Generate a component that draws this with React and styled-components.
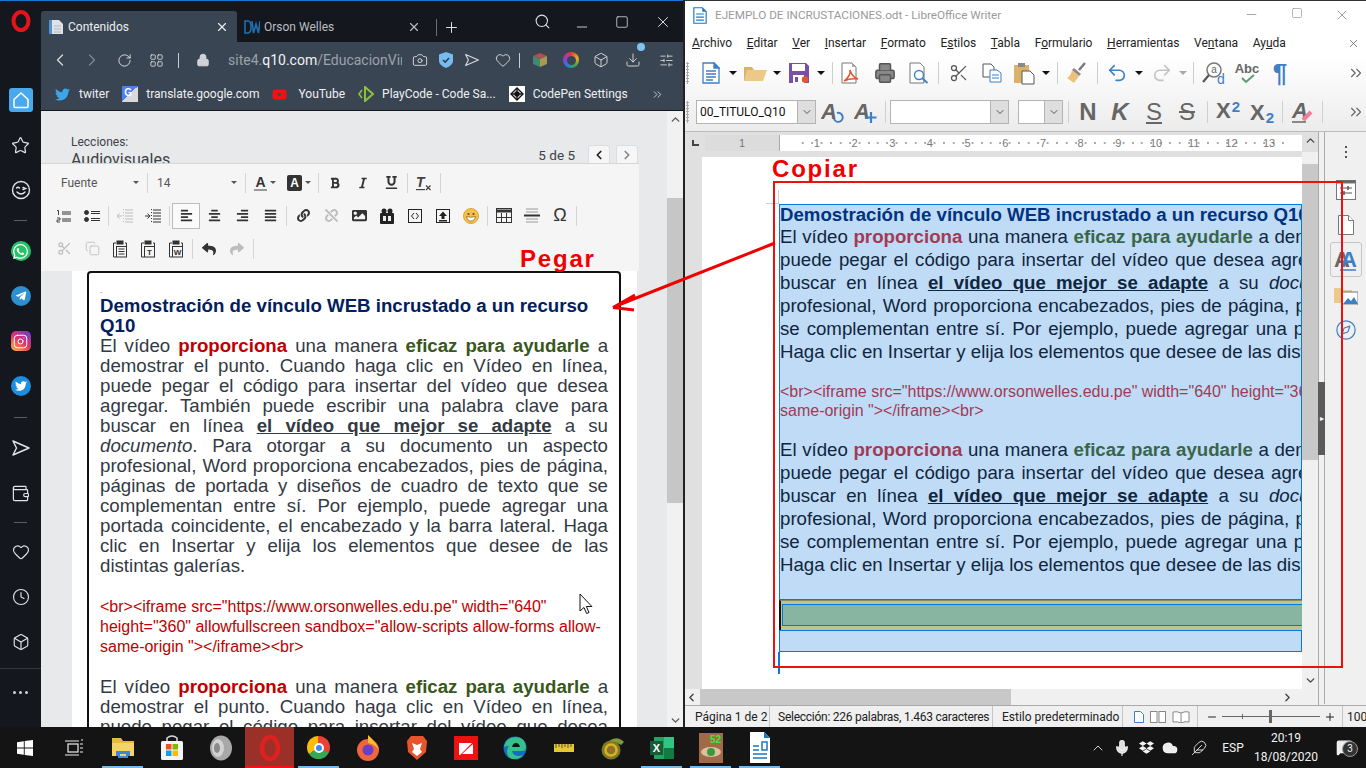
import React from 'react';
import styled, { createGlobalStyle } from 'styled-components';
import {
	ChevronLeft, ChevronRight, RotateCw, LayoutGrid, Lock, Camera, Heart, Box, Download,
	SlidersHorizontal, Search, Minus, Square, X, Plus, Star, Wallet, Clock, Scissors, Copy,
	Undo2, Redo2, Printer, ChevronsRight, ChevronUp, ChevronDown, Instagram, Compass, Mic, Feather,
	Cloud, MessageSquare,
} from 'lucide-react';
import {
	FaWhatsapp, FaTelegramPlane, FaTwitter, FaAlignLeft, FaAlignCenter, FaAlignRight, FaAlignJustify,
	FaLink, FaUnlink, FaImage, FaReply, FaShare, FaDropbox, FaYoutube, FaBold, FaItalic, FaUnderline,
} from 'react-icons/fa';

const GlobalStyle = createGlobalStyle`
	html, body { margin: 0; padding: 0; background: #141414; overflow: hidden; }
	* { box-sizing: border-box; }
`;

const SANS = `"Liberation Sans", Arial, sans-serif`;
const UI = `Roboto, "Noto Sans", sans-serif`;

const Page = styled.div`
	position: relative;
	width: 1366px;
	height: 768px;
	overflow: hidden;
	display: flex;
	flex-direction: column;
	font-family: ${UI};
`;

const Desktop = styled.div`
	display: flex;
	height: 727px;
	background: #222;
`;

/* ---------- Opera ---------- */

const Opera = styled.div`
	display: flex;
	width: 683px;
	border-top: 1px solid #1a78d6;
`;

const Sidebar = styled.nav`
	width: 41px;
	flex: none;
	background: #14181e;
	color: #e2e4e6;
	display: flex;
	flex-direction: column;
	align-items: center;
`;

const LogoBox = styled.div`
	height: 76.5px;
	padding-top: 9px;
	flex: none;
`;

const SideItem = styled.div`
	height: 45px;
	width: 100%;
	flex: none;
	display: flex;
	align-items: center;
	justify-content: center;
`;

const SideDivider = styled.div`
	height: ${p => p.$h}px;
	width: 13px;
	flex: none;
	display: flex;
	align-items: center;
	&::after {
		content: '';
		width: 100%;
		height: 1px;
		background: #5b5f64;
	}
`;

const SideRule = styled.div`
	width: 100%;
	height: 1px;
	margin-top: 3px;
	background: #34383e;
`;

const HomeBadge = styled.div`
	width: 24px;
	height: 24px;
	border-radius: 3px;
	background: #4aa9ec;
	display: flex;
	align-items: center;
	justify-content: center;
	color: #fff;
`;

const RoundBadge = styled.div`
	width: 20px;
	height: 20px;
	border-radius: 50%;
	background: ${p => p.$bg};
	display: flex;
	align-items: center;
	justify-content: center;
	color: #fff;
`;

const InstaBadge = styled.div`
	width: 20px;
	height: 20px;
	border-radius: 5px;
	background: linear-gradient(35deg, #f9b33c 5%, #e1306c 50%, #6a3fc8 95%);
	display: flex;
	align-items: center;
	justify-content: center;
	color: #fff;
`;

const Dots = styled.div`
	display: flex;
	gap: 3px;
	margin-top: 2px;
	& > i {
		width: 3px;
		height: 3px;
		border-radius: 50%;
		background: #cfd1d3;
	}
`;

const BrowserMain = styled.div`
	flex: 1;
	min-width: 0;
	display: flex;
	flex-direction: column;
`;

const TabBar = styled.div`
	height: 41px;
	flex: none;
	background: #14181e;
	display: flex;
	align-items: flex-end;
	color: #d8dadc;
	font-size: 12px;
`;

const Tab = styled.div`
	width: ${p => p.$w}px;
	height: 31px;
	flex: none;
	display: flex;
	align-items: center;
	padding: 0 8px 0 7px;
	gap: 4px;
	border-radius: 3px 3px 0 0;
	background: ${p => (p.$active ? '#3a4553' : 'transparent')};
	color: ${p => (p.$active ? '#eceef0' : '#b9bdc2')};
`;

const TabLabel = styled.span`
	flex: 1;
	white-space: nowrap;
`;

const TabSep = styled.div`
	width: 1px;
	height: 17px;
	background: #6a6e73;
	margin: 0 6px 6px 7px;
`;

const TabPlus = styled.div`
	display: flex;
	margin-bottom: 6px;
	color: #e0e2e4;
`;

const WindowIcons = styled.div`
	display: flex;
	align-items: center;
	height: 41px;
	color: #e0e2e4;
	position: relative;
	margin-left: auto;
`;

const Wbtn = styled.div`
	width: ${p => p.$w}px;
	display: flex;
	justify-content: center;
	padding-top: ${p => p.$top || 0}px;
`;

const AddressBar = styled.div`
	height: 36px;
	flex: none;
	background: #3a4553;
	display: flex;
	align-items: center;
	padding-left: 3px;
	color: #d7dadd;
`;

const Aslot = styled.div`
	width: ${p => p.$w}px;
	flex: none;
	display: flex;
	align-items: center;
	justify-content: center;
	position: relative;
	color: ${p => p.$c || 'inherit'};
`;

const ThinSep = styled.div`
	width: 1px;
	height: 15px;
	background: #c9ccd0;
	flex: none;
`;

const Url = styled.div`
	width: 174px;
	flex: none;
	overflow: hidden;
	white-space: nowrap;
	font-size: 14px;
	color: #9aa2ab;
	margin-left: 6px;
	& b { font-weight: 400; color: #f0f2f4; }
`;

const DownloadDot = styled.i`
	position: absolute;
	top: -9px;
	right: 3px;
	width: 8px;
	height: 8px;
	border-radius: 50%;
	background: #7cc4f2;
`;

const Bookmarks = styled.div`
	height: 33px;
	flex: none;
	background: #3a4553;
	border-bottom: 1px solid #14181e;
	display: flex;
	align-items: center;
	padding-left: 14px;
	font-size: 12px;
	color: #eef0f2;
	white-space: nowrap;
`;

const Bookmark = styled.div`
	display: flex;
	align-items: center;
	gap: ${p => p.$gap || 8}px;
	margin-right: ${p => p.$mr || 13}px;
`;

const GoogleIcon = styled.div`
	width: 16px;
	height: 16px;
	background: linear-gradient(135deg, #4d7ff0 50%, #d9d9dc 50%);
	color: #fff;
	font: bold 10px ${SANS};
	padding: 1px 0 0 2px;
`;

const CodePenIcon = styled.div`
	width: 16px;
	height: 16px;
	background: #fff;
	color: #111;
	display: flex;
	align-items: center;
	justify-content: center;
`;

const ContentRow = styled.div`
	flex: 1;
	min-height: 0;
	display: flex;
`;

const Content = styled.main`
	width: 626px;
	flex: none;
	background: #e8e9eb;
	display: flex;
	flex-direction: column;
	overflow: hidden;
`;

const LessonHeader = styled.header`
	height: 52px;
	flex: none;
	overflow: hidden;
	padding: 24px 0 0 30px;
	display: flex;
	justify-content: space-between;
	color: #3c4248;
`;

const LessonTitle = styled.div`
	font-size: 12px;
	line-height: 14px;
	& > div { font-size: 16px; line-height: 20px; margin-top: 1px; }
`;

const Pager = styled.div`
	display: flex;
	align-items: center;
	height: 18px;
	margin: 11px 30px 0 0;
	font-size: 13.5px;
`;

const PagerBtn = styled.div`
	width: 20px;
	height: 18px;
	background: #f6f6f7;
	box-shadow: 0 0 0 1px #dcdde0;
	border-radius: 2px;
	display: flex;
	align-items: center;
	justify-content: center;
	margin-left: ${p => p.$ml}px;
	color: ${p => (p.$off ? '#8a8a8a' : '#222')};
`;

const EditorBar = styled.div`
	width: 598px;
	height: 108px;
	flex: none;
	background: #f5f5f5;
	border-top: 1px solid #d6d6d6;
	padding: 2px 0 0 9px;
`;

const EdRow = styled.div`
	height: 33px;
	display: flex;
	align-items: center;
`;

const EdSlot = styled.div`
	width: ${p => p.$w || 28}px;
	height: 26px;
	flex: none;
	display: flex;
	align-items: center;
	justify-content: center;
	color: ${p => (p.$off ? '#bdbdbd' : '#333')};
	border: 1px solid ${p => (p.$on ? '#bcbcbc' : 'transparent')};
	background: ${p => (p.$on ? '#fafafa' : 'transparent')};
	gap: 3px;
`;

const EdSep = styled.div`
	width: 1px;
	height: 20px;
	margin: 0 2px;
	background: #d4d4d4;
	flex: none;
`;

const EdCombo = styled.div`
	width: ${p => p.$w}px;
	height: 26px;
	flex: none;
	display: flex;
	align-items: center;
	justify-content: space-between;
	padding: 0 6px 0 ${p => p.$pl}px;
	font-size: 12px;
	color: #555;
`;

const Caret = styled.i`
	width: 0;
	height: 0;
	flex: none;
	border-left: ${p => p.$s || 3}px solid transparent;
	border-right: ${p => p.$s || 3}px solid transparent;
	border-top: ${p => p.$s || 3}px solid ${p => p.$c || '#555'};
`;

const ColorA = styled.span`
	font: bold 14px ${SANS};
	color: #333;
	border-bottom: 2px solid #999;
	line-height: 14px;
	padding: 0 1px;
`;

const BoxA = styled.span`
	font: bold 12px ${SANS};
	color: #fff;
	background: #333;
	border-radius: 2px;
	padding: 1px 3px;
`;

const Omega = styled.span`
	font: 18px ${SANS};
	color: #333;
`;

const EditArea = styled.div`
	flex: 1;
	min-height: 0;
	width: 565px;
	margin-left: 31px;
	padding: 0 16px 0 15px;
	background: #fff;
	overflow: hidden;
`;

const Doc = styled.div`
	--ink: ${p => p.$ink};
	--hot: ${p => p.$hot};
	--leaf: ${p => p.$leaf};
	--head: ${p => p.$headc};
	font-family: ${SANS};
	color: var(--ink);
`;

const DocBox = styled(Doc)`
	height: 700px;
	border: 2px solid #111;
	border-radius: 4px;
	padding: 8px 11px;
	font-size: 18.67px;
	line-height: 20px;
`;

const Speck = styled.div`
	height: 15px;
	font-size: 8px;
`;

const Heading = styled.div`
	font-weight: 700;
	color: var(--head);
`;

const Para = styled.p`
	margin: 0;
	text-align: justify;
`;

const Hot = styled.b`color: var(--hot);`;
const Leaf = styled.b`color: var(--leaf);`;
const Under = styled.b`text-decoration: underline;`;

const Code = styled.p`
	color: var(--hot);
	font-size: 16px;
	margin: 0;
`;

const LeftCode = styled(Code)`
	margin: 21px 0 20px;
	line-height: 20px;
`;

const ScrollTrack = styled.div`
	width: 16px;
	flex: none;
	background: #f1f1f1;
	display: flex;
	flex-direction: column;
	align-items: center;
	color: #555;
	padding-top: 2px;
`;

const ScrollThumb = styled.div`
	width: 16px;
	height: 305px;
	margin-top: 72px;
	background: #c6c6c6;
	margin-bottom: auto;
`;

/* ---------- Writer ---------- */

const Writer = styled.div`
	width: 681px;
	margin-left: 2px;
	display: flex;
	flex-direction: column;
	background: #fff;
	border-top: 1px solid #333;
	font-family: ${UI};
`;

const TitleBar = styled.div`
	height: 28px;
	flex: none;
	display: flex;
	align-items: center;
	padding-left: 8px;
	font-size: 11.7px;
	color: #9a9a9a;
	gap: 8px;
`;

const TitleButtons = styled.div`
	margin-left: auto;
	display: flex;
	color: #888;
	padding-right: 2px;
`;

const TitleBtn = styled.div`
	width: 45px;
	display: flex;
	justify-content: center;
`;

const MenuBar = styled.div`
	height: 28px;
	flex: none;
	display: flex;
	align-items: center;
	gap: 14.6px;
	padding-left: 7px;
	font-size: 12px;
	color: #222;
	& u { text-underline-offset: 1px; }
`;

const MenuClose = styled.div`
	margin-left: auto;
	padding-right: 6px;
	color: #555;
	display: flex;
`;

const ToolStack = styled.div`
	flex: none;
	background: linear-gradient(#fff, #ececec);
	border-bottom: 1px solid #bcbcbc;
`;

const ToolRow = styled.div`
	height: ${p => p.$h}px;
	display: flex;
	align-items: center;
	padding-bottom: ${p => p.$pb || 0}px;
`;

const Grip = styled.div`
	width: 11px;
	height: 22px;
	flex: none;
	background: radial-gradient(circle, #a8a8a8 1px, transparent 1.2px) 1px 0 / 3px 3px repeat-y;
`;

const Tslot = styled.div`
	width: ${p => p.$w}px;
	flex: none;
	display: flex;
	align-items: center;
	justify-content: center;
	position: relative;
	color: ${p => p.$c || '#555'};
`;

const Tsep = styled.div`
	width: ${p => p.$w}px;
	height: 22px;
	flex: none;
	display: flex;
	justify-content: center;
	&::after {
		content: '';
		width: 1px;
		background: #cfcfcf;
	}
`;

const Overflow = styled.div`
	margin-left: auto;
	padding-right: 1px;
	color: #666;
	display: flex;
`;

const Combo = styled.div`
	width: ${p => p.$w}px;
	height: 24px;
	flex: none;
	margin-left: ${p => p.$ml || 0}px;
	background: #fff;
	border: 1px solid #b4b4b4;
	display: flex;
	align-items: center;
	font-size: 12px;
	color: #111;
	padding-left: 3px;
	white-space: nowrap;
`;

const ComboArrow = styled.div`
	margin-left: auto;
	width: 18px;
	height: 22px;
	background: #dedede;
	border-left: 1px solid #b4b4b4;
	display: flex;
	align-items: center;
	justify-content: center;
	color: #555;
`;

const BigGlyph = styled.span`
	font: ${p => p.$font || 'bold'} 24px ${SANS};
	color: #666;
	line-height: 24px;
	text-decoration: ${p => p.$deco || 'none'};
`;

const Script = styled.span`
	font: bold 22px ${SANS};
	color: #666;
	display: flex;
	align-items: ${p => (p.$up ? 'flex-start' : 'flex-end')};
	height: 26px;
	line-height: 24px;
	& > i {
		font: bold 15px ${SANS};
		color: #3f7fc4;
		line-height: ${p => (p.$up ? '15px' : '14px')};
		margin-left: 1px;
	}
`;

const Pilcrow = styled.span`
	font: bold 26px ${SANS};
	color: #3f7fc4;
`;

const WriterBody = styled.div`
	flex: 1;
	min-height: 0;
	display: flex;
	position: relative;
`;

const DocColumn = styled.div`
	width: 633px;
	flex: none;
	display: flex;
	flex-direction: column;
`;

const RulerRow = styled.div`
	height: 20px;
	flex: none;
	display: flex;
	background: #e0e0e0;
	padding-top: 3px;
	color: #444;
`;

const TabStop = styled.div`
	width: 20px;
	flex: none;
	padding: 5px 0 0 7px;
	& > i {
		display: block;
		width: 7px;
		height: 6px;
		border-left: 2px solid #444;
		border-bottom: 2px solid #444;
	}
`;

const Ruler = styled.div`
	width: 597px;
	flex: none;
	height: 16px;
	background: #fff;
	display: flex;
	font: 11px ${SANS};
	color: #777;
	overflow: hidden;
`;

const RulerMargin = styled.div`
	position: relative;
	z-index: 1;
	width: 75px;
	flex: none;
	background: #dcdcdc;
	border-right: 1px solid #aaa;
	text-align: center;
	line-height: 16px;
`;

const RulerNum = styled.span`
	width: 37.7px;
	flex: none;
	text-align: center;
	line-height: 16px;
	transform: translateX(18px);
	background: radial-gradient(circle, #aaa 0.7px, transparent 1px) 0 0 / 9.425px 16px repeat-x;
`;

const UpBox = styled.div`
	width: 16px;
	flex: none;
	display: flex;
	justify-content: center;
	margin-top: -1px;
	color: #444;
`;

const DocRow = styled.div`
	flex: 1;
	min-height: 0;
	display: flex;
	background: #e0e0e0;
`;

const Sheet = styled.div`
	position: relative;
	width: 600px;
	margin: 5px 0 0 17px;
	flex: none;
	background: #fff;
	padding: 47px 0 0 77px;
	overflow: hidden;
`;

const CropMark = styled.div`
	position: absolute;
	left: 64px;
	top: 33px;
	width: 13px;
	height: 14px;
	border-right: 1px solid #cfcfcf;
	border-bottom: 1px solid #cfcfcf;
`;

const Selection = styled(Doc)`
	position: relative;
	width: 523px;
	background: #c0dbf5;
	border: 1px solid #0a76e0;
	overflow: hidden;
	font-size: 18.67px;
`;

const SelectedHead = styled(Heading)`
	line-height: 19.5px;
	white-space: nowrap;
`;

const Wide = styled.div`
	width: 965px;
	line-height: 23px;
`;

const SelectedCode = styled(Code)`
	width: 965px;
	line-height: 19px;
	margin: 19px 0 18px;
`;

const TrailingRoom = styled.div`
	height: 23px;
`;

const TableBand = styled.div`
	width: 523px;
	height: 30px;
	background: #b9c78e;
	border-top: 1px solid #8a8a60;
	border-left: 2px solid #111;
	padding: 3px 0 0 1px;
	overflow: hidden;
`;

const TableCell = styled.div`
	width: 540px;
	height: 22px;
	background: #87b5a2;
	border: 1px solid #0a76e0;
`;

const EmptyPara = styled.div`
	width: 523px;
	height: 22px;
	background: #c0dbf5;
	border: 1px solid #0a76e0;
`;

const CursorLine = styled.div`
	width: 2px;
	height: 22px;
	margin-left: -1px;
	background: #0a76e0;
`;

const VScroll = styled.div`
	width: 16px;
	flex: none;
	background: #f0f0f0;
	display: flex;
	flex-direction: column;
	align-items: center;
	color: #444;
	padding: 8px 0 2px;
`;

const VThumb = styled.div`
	width: 16px;
	height: 296px;
	margin-top: 4px;
	margin-bottom: auto;
	background: #c8c8c8;
`;

const HScroll = styled.div`
	height: 16px;
	flex: none;
	background: #f0f0f0;
	display: flex;
	align-items: center;
	color: #444;
`;

const HThumb = styled.div`
	width: 311px;
	height: 16px;
	background: #c8c8c8;
	margin-left: 1px;
`;

const HArrow = styled.div`
	width: ${p => p.$w}px;
	display: flex;
	justify-content: ${p => (p.$end ? 'flex-end' : 'flex-start')};
`;

const Deck = styled.aside`
	flex: 1;
	background: #f0f0f0;
	border-left: 1px solid #aaa;
	display: flex;
	flex-direction: column;
	align-items: center;
	padding-left: 6px;
	position: relative;
	&::before {
		content: '';
		position: absolute;
		left: 5px;
		top: 0;
		bottom: 1px;
		width: 1px;
		background: #aaa;
	}
`;

const DeckDots = styled.div`
	height: 40px;
	flex: none;
	display: flex;
	flex-direction: column;
	justify-content: center;
	gap: 3px;
	& > i {
		width: 2px;
		height: 2px;
		background: #555;
	}
`;

const DeckItem = styled.div`
	width: 32px;
	height: 35px;
	flex: none;
	display: flex;
	align-items: center;
	justify-content: center;
	border: ${p => (p.$on ? '1px solid #c6c6c6' : 'none')};
	border-radius: 3px;
`;

const Collapse = styled.div`
	position: absolute;
	left: 633px;
	top: 250px;
	width: 7px;
	height: 73px;
	background: #5a5a5a;
	color: #fff;
	display: flex;
	align-items: center;
	justify-content: center;
	font-size: 8px;
`;

const StatusBar = styled.footer`
	height: 22px;
	flex: none;
	background: #f0f0f0;
	border-top: 1px solid #aaa;
	display: flex;
	align-items: center;
	font-size: 12px;
	color: #222;
	white-space: nowrap;
	overflow: hidden;
`;

const StatusCell = styled.div`
	width: ${p => p.$w}px;
	flex: none;
	height: 22px;
	display: flex;
	align-items: center;
	gap: ${p => p.$gap || 0}px;
	padding-left: ${p => p.$pl || 0}px;
	letter-spacing: ${p => (p.$tight ? '-0.25px' : 'normal')};
	border-right: ${p => (p.$last ? 'none' : '1px solid #c4c4c4')};
`;

const ZoomLine = styled.div`
	position: relative;
	width: 98px;
	height: 1px;
	background: #666;
	margin: 0 4px;
	flex: none;
	&::before {
		content: '';
		position: absolute;
		left: 20px;
		top: -2px;
		width: 1px;
		height: 5px;
		background: #666;
	}
	&::after {
		content: '';
		position: absolute;
		left: 47px;
		top: -6px;
		width: 3px;
		height: 13px;
		background: #666;
	}
`;

/* ---------- Taskbar ---------- */

const Taskbar = styled.footer`
	height: 41px;
	flex: none;
	background: #141414;
	display: flex;
	align-items: stretch;
	color: #f2f2f2;
`;

const TaskItem = styled.div`
	width: 49px;
	flex: none;
	display: flex;
	align-items: center;
	justify-content: center;
	position: relative;
	background: ${p => (p.$active ? '#9a3028' : 'transparent')};
	&::after {
		content: '';
		display: ${p => (p.$open || p.$active ? 'block' : 'none')};
		position: absolute;
		left: ${p => (p.$active ? 0 : 4)}px;
		right: ${p => (p.$active ? 0 : 4)}px;
		bottom: 0;
		height: 2px;
		background: ${p => (p.$active ? '#f01414' : '#76b9ed')};
	}
`;

const Tray = styled.div`
	margin-left: auto;
	display: flex;
	align-items: center;
	font-size: 12px;
`;

const TrayIcon = styled.div`
	width: ${p => p.$w}px;
	flex: none;
	display: flex;
	justify-content: center;
`;

const TrayClock = styled.div`
	width: 72px;
	text-align: center;
	font-size: 12px;
	line-height: 19px;
`;

const Notify = styled.div`
	position: relative;
	width: 44px;
	height: 100%;
	display: flex;
	align-items: center;
	justify-content: center;
`;

const NotifyCount = styled.span`
	position: absolute;
	left: 20px;
	top: 14px;
	width: 16px;
	height: 16px;
	border-radius: 50%;
	background: #333;
	border: 1px solid #999;
	font-size: 10px;
	line-height: 14px;
	text-align: center;
`;

const ConicIcon = styled.div`
	width: ${p => p.$size || 23}px;
	height: ${p => p.$size || 23}px;
	border-radius: 50%;
	background: ${p => p.$bg};
	display: flex;
	align-items: center;
	justify-content: center;
	& > i {
		width: ${p => p.$core}px;
		height: ${p => p.$core}px;
		border-radius: 50%;
		background: ${p => p.$corebg};
		border: ${p => p.$ring || 'none'};
	}
`;

/* ---------- Annotations ---------- */

const RedFrame = styled.div`
	position: absolute;
	left: 773px;
	top: 181px;
	width: 570px;
	height: 487px;
	border: 2px solid #f00f0f;
	pointer-events: none;
`;

const Callout = styled.div`
	position: absolute;
	left: ${p => p.$x}px;
	top: ${p => p.$y}px;
	font: bold 24px/28px ${SANS};
	letter-spacing: 1.8px;
	color: #f00000;
	pointer-events: none;
`;

const ArrowLayer = styled.svg`
	position: absolute;
	left: 0;
	top: 0;
	pointer-events: none;
`;

/* ---------- Drawn icons ---------- */

const OperaLogo = () => (
	<svg width="20" height="22" viewBox="0 0 20 22">
		<ellipse cx="10" cy="11" rx="7.500" ry="9" fill="none" stroke="#e3141b" strokeWidth="4" />
	</svg>
);

const HouseIcon = () => (
	<svg width="18" height="18" viewBox="0 0 18 18" fill="none" stroke="currentColor" strokeWidth="1.500" strokeLinejoin="round">
		<path d="M2 8.500L9 2l7 6.500V15.500q0 1-1 1H3q-1 0-1-1z" />
	</svg>
);

const WinkIcon = () => (
	<svg width="20" height="20" viewBox="0 0 20 20" fill="none" stroke="currentColor" strokeWidth="1.400" strokeLinecap="round">
		<circle cx="10" cy="10" r="8.500" />
		<path d="M5.500 8q1.500-1.500 3 0M12 7.500l2.500 1-2.500 1M6 12q4 4 8 0" />
	</svg>
);

const PlaneIcon = ({ size = 20 }) => (
	<svg width={size} height={size} viewBox="0 0 20 20" fill="none" stroke="currentColor" strokeWidth="1.400" strokeLinejoin="round">
		<path d="M2 3l16 7-16 7 3.500-7z" />
	</svg>
);

const DocTabIcon = () => (
	<svg width="16" height="16" viewBox="0 0 16 16">
		<path d="M1 1h10l4 4v10H1z" fill="#dfe3e8" />
		<path d="M1 1h3v14H1z" fill="#4f93d2" />
		<path d="M6 7h7M6 10h7M6 13h7" stroke="#b4b8bd" />
	</svg>
);

const DwIcon = () => (
	<svg width="16" height="14" viewBox="0 0 16 14">
		<path d="M1 1h3q3 0 3 6t-3 6H1z M8 1l1.500 12L12 4l2.500 9L16 1" fill="none" stroke="#1f6fb2" strokeWidth="1.600" />
	</svg>
);

const ShieldIcon = () => (
	<svg width="14" height="16" viewBox="0 0 14 16">
		<path d="M7 0l7 2.500V9q0 4-7 7-7-3-7-7V2.500z" fill="#74bdf0" />
		<path d="M4 8l2.200 2.200L10 6" fill="none" stroke="#2d3a48" strokeWidth="1.600" />
	</svg>
);

const CubeColor = () => (
	<svg width="16" height="16" viewBox="0 0 16 16">
		<path d="M8 1l7 3-7 3-7-3z" fill="#b05050" />
		<path d="M1 4l7 3v8l-7-3z" fill="#3f8a70" />
		<path d="M15 4l-7 3v8l7-3z" fill="#a89a50" />
	</svg>
);

const PlayCodeIcon = () => (
	<svg width="16" height="16" viewBox="0 0 16 16">
		<path d="M4 4L1 8l3 4" fill="none" stroke="#8fbf3f" strokeWidth="1.600" />
		<path d="M7 1l8 7-8 7z" fill="none" stroke="#8fbf3f" strokeWidth="2" />
	</svg>
);

const CodePenGlyph = () => (
	<svg width="14" height="14" viewBox="0 0 14 14" fill="none" stroke="#111" strokeWidth="1.400">
		<path d="M7 1l6 6-6 6-6-6z" />
		<path d="M1 7h12M7 1v12" />
		<circle cx="7" cy="7" r="2" fill="#111" />
	</svg>
);

const LeftCursor = () => (
	<ArrowLayer width="1366" height="768" viewBox="0 0 1366 768">
		<path d="M580 594v17l4-3.500 2.600 6 2.400-1-2.600-6h5.500z" fill="#fff" stroke="#111" strokeWidth="1" />
	</ArrowLayer>
);

const NumberList = () => (
	<svg width="16" height="14" viewBox="0 0 16 14" fill="none" stroke="#333">
		<path d="M6 3h9M6 5h9M6 10h9M6 12h9" />
		<path d="M1 1.500h1.500V6M1 9h3v2H1v2h3" strokeWidth="0.900" />
	</svg>
);

const BulletList = () => (
	<svg width="16" height="14" viewBox="0 0 16 14" fill="#333" stroke="#333">
		<circle cx="2.500" cy="3.500" r="2" />
		<circle cx="2.500" cy="10.500" r="2" />
		<path d="M7 2.500h9M7 4.500h9M7 9.500h9M7 11.500h9" fill="none" />
	</svg>
);

const IndentIcon = ({ out }) => (
	<svg width="16" height="14" viewBox="0 0 16 14" fill="none" stroke="currentColor">
		<path d="M8 1h8M8 4h8M8 7h8M8 10h8M8 13h8" />
		<path d={out ? 'M5 7H0M2.500 4.500L0 7l2.500 2.500' : 'M0 7h5M2.500 4.500L5 7 2.500 9.500'} />
		<path d="M6.500 0v14" strokeDasharray="1 2" />
	</svg>
);

const ClipIcon = ({ mark }) => (
	<svg width="16" height="18" viewBox="0 0 16 18" fill="none" stroke="#333" strokeWidth="1">
		<path d="M4 3H1.500v14H4" />
		<path d="M13 3h1.500v3" />
		<rect x="5" y="1" width="6" height="3" fill="#333" />
		<rect x="4.500" y="6.500" width="10" height="10.500" fill="#f5f5f5" />
		<text x="9.500" y="15" textAnchor="middle" fontSize="8" fontWeight="700" fill="#333" stroke="none" fontFamily={SANS}>{mark}</text>
	</svg>
);

const ClipLines = () => (
	<svg width="16" height="18" viewBox="0 0 16 18" fill="none" stroke="#333" strokeWidth="1">
		<path d="M4 3H1.500v14H4" />
		<path d="M13 3h1.500v3" />
		<rect x="5" y="1" width="6" height="3" fill="#333" />
		<rect x="4.500" y="6.500" width="10" height="10.500" fill="#f5f5f5" />
		<path d="M6.500 9h6M6.500 11.500h6M6.500 14h6" />
	</svg>
);

const FilmIcon = () => (
	<svg width="16" height="16" viewBox="0 0 16 16" fill="#222">
		<rect x="1" y="5" width="14" height="11" rx="1" />
		<circle cx="5" cy="3" r="2.500" />
		<circle cx="11" cy="3" r="2.500" />
		<rect x="4" y="8" width="3" height="5" fill="#eee" />
		<rect x="9" y="8" width="3" height="5" fill="#eee" />
	</svg>
);

const SourceIcon = () => (
	<svg width="14" height="14" viewBox="0 0 14 14" fill="none" stroke="#222">
		<rect x="0.500" y="0.500" width="13" height="13" />
		<path d="M6 4L3.500 7 6 10M8 4l2.500 3L8 10" />
	</svg>
);

const UploadIcon = () => (
	<svg width="14" height="14" viewBox="0 0 14 14">
		<rect x="0.500" y="0.500" width="13" height="13" fill="none" stroke="#222" />
		<path d="M7 2.500L11 7H8.500v3h-3V7H3zM3 11h8v1.500H3z" fill="#222" />
	</svg>
);

const SmileyIcon = () => (
	<svg width="16" height="16" viewBox="0 0 16 16">
		<circle cx="8" cy="8" r="7.500" fill="#f4c04a" stroke="#d9a43a" />
		<circle cx="5.500" cy="6" r="1.100" fill="#6b4a1a" />
		<circle cx="10.500" cy="6" r="1.100" fill="#6b4a1a" />
		<path d="M3.500 8.500q4.500 1.500 9 0-1 4.500-4.500 4.500t-4.500-4.500z" fill="#fff" stroke="#6b4a1a" strokeWidth="0.600" />
	</svg>
);

const TableIcon = () => (
	<svg width="16" height="15" viewBox="0 0 16 15" fill="none" stroke="#333">
		<rect x="0.500" y="0.500" width="15" height="14" />
		<path d="M0 3h16" strokeWidth="3" />
		<path d="M5.500 5v10M10.500 5v10M0 9.500h16" />
	</svg>
);

const RuleIcon = () => (
	<svg width="16" height="16" viewBox="0 0 16 16" stroke="#999">
		<path d="M2 1h12M2 4h12M2 11h12M2 14h12" />
		<path d="M0 7.500h16" stroke="#333" strokeWidth="2" />
	</svg>
);

const RemoveFormat = () => (
	<svg width="16" height="16" viewBox="0 0 16 16" fill="#444">
		<text x="0" y="12" fontSize="14" fontWeight="700" fontStyle="italic" fontFamily={SANS}>T</text>
		<path d="M0 14h9v1.200H0z" />
		<path d="M10 10.500l4.500 4.500M14.500 10.500L10 15" stroke="#444" strokeWidth="1.300" />
	</svg>
);

const NewDoc = () => (
	<svg width="18" height="22" viewBox="0 0 18 22" fill="#fff" stroke="#3f7fc4" strokeWidth="1.300">
		<path d="M1 1h11l5 5v15H1z" />
		<path d="M12 1l5 5h-5z" fill="#3f7fc4" />
		<path d="M4 9h10M4 12h10M4 15h10M4 18h7" />
	</svg>
);

const Folder = () => (
	<svg width="24" height="18" viewBox="0 0 24 18">
		<path d="M1 3h8l2 3h8v10H1z" fill="#d9b36c" />
		<path d="M4 6h20l-4 11H1z" fill="#ecc988" />
	</svg>
);

const Floppy = () => (
	<svg width="22" height="22" viewBox="0 0 22 22">
		<path d="M1 1h17l3 3v17H1z" fill="#7b4fa8" />
		<rect x="4" y="2" width="13" height="7" fill="#fff" />
		<rect x="5" y="13" width="11" height="8" fill="#fff" />
		<rect x="7" y="15" width="3" height="5" fill="#7b4fa8" />
		<circle cx="17" cy="17.500" r="3.200" fill="#e4572e" />
	</svg>
);

const PdfDoc = () => (
	<svg width="20" height="22" viewBox="0 0 20 22" fill="none">
		<path d="M1 1h10l4 4v16H1z" stroke="#777" fill="#fff" />
		<path d="M11 1l4 4h-4z" fill="#aaa" />
		<path d="M9 8q1 6-6 11 6-3 14-2-6-2-8-9z" stroke="#e4572e" strokeWidth="1.500" />
	</svg>
);

const PreviewDoc = () => (
	<svg width="20" height="22" viewBox="0 0 20 22" fill="none" stroke="#777">
		<path d="M1 1h10l4 4v16H1z" fill="#fff" />
		<circle cx="10" cy="13" r="4.500" stroke="#3f7fc4" strokeWidth="1.400" fill="#fff" />
		<path d="M13.500 16.500l5 4.500" stroke="#3f7fc4" strokeWidth="1.800" />
	</svg>
);

const CopyDocs = () => (
	<svg width="20" height="20" viewBox="0 0 20 20" fill="#fff" stroke="#555">
		<path d="M1 1h8l3 3v10H1z" />
		<path d="M8 7h7l4 3v9H8z" stroke="#3f7fc4" />
		<path d="M10 12h7M10 15h7" stroke="#3f7fc4" />
	</svg>
);

const PasteIcon = () => (
	<svg width="22" height="23" viewBox="0 0 22 23">
		<rect x="1" y="3" width="15" height="18" fill="#d9b36c" />
		<rect x="5" y="1" width="7" height="4" fill="#888" />
		<path d="M9 9h8l4 4v9H9z" fill="#fff" stroke="#555" />
	</svg>
);

const BrushIcon = () => (
	<svg width="20" height="22" viewBox="0 0 20 22">
		<path d="M13 8l6-7" stroke="#777" strokeWidth="2.400" />
		<path d="M8 6l7 6-2 2-7-6z" fill="#888" />
		<path d="M6 8l7 6-5 7-7-5q4-2 5-8z" fill="#ecc078" />
	</svg>
);

const FindIcon = () => (
	<svg width="24" height="24" viewBox="0 0 24 24" fill="none">
		<circle cx="12" cy="9" r="7" stroke="#777" strokeWidth="1.500" />
		<path d="M7 14l-6 7" stroke="#555" strokeWidth="2.200" />
		<text x="12" y="12" textAnchor="middle" fontSize="10" fill="#666" fontFamily={SANS}>a</text>
		<text x="19" y="23" textAnchor="middle" fontSize="14" fill="#3f7fc4" fontFamily={SANS}>d</text>
	</svg>
);

const AbcIcon = () => (
	<svg width="26" height="24" viewBox="0 0 26 24" fill="none">
		<text x="13" y="12" textAnchor="middle" fontSize="13" fontWeight="700" fill="#666" fontFamily={SANS}>Abc</text>
		<path d="M8 17l4 4 8-7" stroke="#5a9a78" strokeWidth="2" />
	</svg>
);

const UpdateStyle = () => (
	<svg width="24" height="24" viewBox="0 0 24 24" fill="none">
		<text x="0" y="19" fontSize="22" fontWeight="700" fontStyle="italic" fill="#666" fontFamily={SANS}>A</text>
		<path d="M13 19a4.500 4.500 0 1 0 3-6" stroke="#3f7fc4" strokeWidth="2" />
	</svg>
);

const NewStyle = () => (
	<svg width="24" height="24" viewBox="0 0 24 24" fill="none">
		<text x="0" y="19" fontSize="22" fontWeight="700" fontStyle="italic" fill="#666" fontFamily={SANS}>A</text>
		<path d="M17 12v11M11.500 17.500h11" stroke="#3f7fc4" strokeWidth="2.200" />
	</svg>
);

const HighlightA = () => (
	<svg width="24" height="24" viewBox="0 0 24 24" fill="none">
		<text x="2" y="18" fontSize="22" fontWeight="700" fontStyle="italic" fill="#666" fontFamily={SANS}>A</text>
		<path d="M2 22h14" stroke="#666" strokeWidth="1.500" />
		<path d="M13 20l8-8" stroke="#ef7f98" strokeWidth="4" />
	</svg>
);

const DeckProps = () => (
	<svg width="20" height="20" viewBox="0 0 20 20" fill="#fff" stroke="#777">
		<rect x="0.500" y="0.500" width="19" height="19" />
		<rect x="0" y="0" width="20" height="3" fill="#666" />
		<path d="M4 8h12M4 13h12" stroke="#555" />
		<path d="M12 6v4M8 11v4" stroke="#555" strokeWidth="1.500" />
	</svg>
);

const DeckPage = () => (
	<svg width="16" height="20" viewBox="0 0 16 20" fill="#fff" stroke="#777">
		<path d="M0.500 0.500h10l5 5v14H0.500z" />
		<path d="M10.500 0.500v5h5" />
	</svg>
);

const DeckStyles = () => (
	<svg width="24" height="24" viewBox="0 0 24 24">
		<text x="0" y="19" fontSize="22" fontWeight="700" fill="#666" fontFamily={SANS}>A</text>
		<text x="7" y="19" fontSize="22" fontWeight="700" fill="#3f7fc4" fontFamily={SANS}>A</text>
		<path d="M6 22h16" stroke="#3f7fc4" strokeWidth="1.500" />
	</svg>
);

const DeckGallery = () => (
	<svg width="24" height="20" viewBox="0 0 24 20">
		<path d="M0 3h8l2 2h8v13H0z" fill="#ecc988" />
		<rect x="8" y="7" width="16" height="13" fill="#fff" stroke="#777" />
		<path d="M9 19l5-6 3 3 3-4 4 7z" fill="#3f7fc4" />
	</svg>
);

const PageSingle = () => (
	<svg width="10" height="12" viewBox="0 0 10 12" fill="#fff" stroke="#3f7fc4"><path d="M0.500 0.500h6l3 3v8h-9z" /></svg>
);

const PageDouble = () => (
	<svg width="16" height="12" viewBox="0 0 16 12" fill="#fff" stroke="#888"><rect x="0.500" y="0.500" width="6.500" height="11" /><rect x="9" y="0.500" width="6.500" height="11" /></svg>
);

const PageBook = () => (
	<svg width="18" height="12" viewBox="0 0 18 12" fill="#fff" stroke="#888"><path d="M9 2Q5 0 1 1v10q4-1 8 1 4-2 8-1V1q-4-1-8 1zM9 2v10" /></svg>
);

const WriterDocIcon = () => (
	<svg width="14" height="17" viewBox="0 0 18 22">
		<path d="M1 1h11l5 5v15H1z" fill="#fff" stroke="#1b78c2" strokeWidth="1.500" />
		<path d="M12 1l5 5h-5z" fill="#1b78c2" />
		<path d="M4 9h10M4 13h10M4 17h10" stroke="#1b78c2" strokeWidth="1.500" />
	</svg>
);

const WindowsLogo = () => (
	<svg width="16" height="16" viewBox="0 0 16 16" fill="#fff">
		<path d="M0 2.200L6.800 1.200V7.500H0zM7.700 1.100L16 0V7.500H7.700zM0 8.500h6.800v6.300L0 13.800zM7.700 8.500H16V16l-8.300-1.100z" />
	</svg>
);

const ExplorerIcon = () => (
	<svg width="24" height="22" viewBox="0 0 24 22">
		<path d="M1 1h9l2 3h11v15H1z" fill="#e8b93f" />
		<rect x="1" y="6" width="22" height="13" fill="#f5d36a" />
		<path d="M5 19v-5h14v5h-4v-2H9v2z" fill="#3e86d6" />
		<rect x="7" y="19" width="10" height="2" fill="#3e86d6" />
	</svg>
);

const StoreIcon = () => (
	<svg width="24" height="26" viewBox="0 0 24 26">
		<path d="M7 6V3q5-4 10 0v3" fill="none" stroke="#ddd" strokeWidth="1.500" />
		<rect x="1" y="6" width="22" height="19" rx="1.500" fill="#f4f4f4" />
		<rect x="6" y="9" width="5.500" height="5.500" fill="#f25022" />
		<rect x="12.500" y="9" width="5.500" height="5.500" fill="#7fba00" />
		<rect x="6" y="15.500" width="5.500" height="5.500" fill="#00a4ef" />
		<rect x="12.500" y="15.500" width="5.500" height="5.500" fill="#ffb900" />
	</svg>
);

const FirefoxIcon = () => (
	<svg width="24" height="28" viewBox="0 0 24 28">
		<circle cx="12" cy="16" r="11" fill="#f0653a" />
		<path d="M12 1q5 4 8 9 2 3 3 6-4-6-11-7z" fill="#ffbd2e" />
		<circle cx="12" cy="16" r="5.500" fill="#6a3fc8" />
	</svg>
);

const BraveIcon = () => (
	<svg width="22" height="26" viewBox="0 0 22 26">
		<path d="M5 1h12l4 5-1 11-9 8-9-8L1 6z" fill="#e8552a" />
		<path d="M6 8l5 2 5-2-2 6 2 3-5 4-5-4 2-3z" fill="#fff" />
	</svg>
);

const RedAppIcon = () => (
	<svg width="24" height="24" viewBox="0 0 24 24">
		<rect width="24" height="24" fill="#ee1111" />
		<path d="M5 7h13L6 19H5zM19 8v10H8z" fill="#fff" />
	</svg>
);

const EdgeIcon = () => (
	<svg width="24" height="24" viewBox="0 0 24 24">
		<circle cx="12" cy="12" r="11.500" fill="#0f6fc6" />
		<path d="M1 11Q3 1 13 1q9 0 10 10 0 4-4 4H9q1 5 7 5 2 0 4-1-3 4-8 4Q4 23 4 15q0-3 2-5-3 0-5 1z" fill="#36c08a" />
		<path d="M9 11q1-4 4-4t4 4z" fill="#141414" />
	</svg>
);

const RulerApp = () => (
	<svg width="20" height="8" viewBox="0 0 20 8">
		<rect width="20" height="8" fill="#e8c832" />
		<path d="M2 0v4M5 0v3M8 0v4M11 0v3M14 0v4M17 0v3" stroke="#554" />
	</svg>
);

const ChameleonIcon = () => (
	<svg width="24" height="26" viewBox="0 0 24 26" fill="none">
		<circle cx="10" cy="15" r="9.500" fill="#7a7a2a" />
		<circle cx="10" cy="15" r="5.500" stroke="#e0b020" strokeWidth="2.500" />
		<circle cx="10" cy="15" r="1.500" fill="#e05030" />
		<path d="M8 6q8-6 15 1l-3 3q-6-4-12-4z" fill="#7f9a3a" />
	</svg>
);

const ExcelIcon = () => (
	<svg width="24" height="24" viewBox="0 0 24 24">
		<rect x="4" y="1" width="20" height="22" fill="#21a366" />
		<rect x="14" y="1" width="10" height="11" fill="#33c481" />
		<rect x="14" y="12" width="10" height="11" fill="#107c41" />
		<rect x="0" y="5" width="13" height="14" fill="#185c37" />
		<text x="6.500" y="16" textAnchor="middle" fontSize="11" fontWeight="700" fill="#fff" fontFamily={SANS}>X</text>
	</svg>
);

const EyeApp = () => (
	<svg width="24" height="30" viewBox="0 0 24 30">
		<rect width="24" height="30" fill="#a06a48" />
		<ellipse cx="12" cy="19" rx="10" ry="5" fill="#dcc0a0" />
		<circle cx="12" cy="19" r="4" fill="#3a9a3a" />
		<text x="22" y="10" textAnchor="end" fontSize="10" fontWeight="700" fill="#33ee33" fontFamily={SANS}>52</text>
	</svg>
);

const WriterApp = () => (
	<svg width="20" height="31" viewBox="0 0 20 31">
		<path d="M0 0h14l6 6v25H0z" fill="#fff" />
		<path d="M14 0l6 6h-6z" fill="#1b78c2" />
		<path d="M3 14h6M3 18h6M3 22h14M3 26h14M12 10h5v8h-5z" stroke="#1b78c2" strokeWidth="1.500" fill="none" />
	</svg>
);

const OperaTask = () => (
	<svg width="24" height="28" viewBox="0 0 24 28">
		<ellipse cx="12" cy="14" rx="8" ry="11" fill="none" stroke="#e0201e" strokeWidth="4.500" />
	</svg>
);

const SpeakerApp = () => (
	<svg width="24" height="26" viewBox="0 0 24 26">
		<ellipse cx="12" cy="13" rx="11" ry="12.500" fill="#a8a8a8" />
		<ellipse cx="9" cy="13" rx="6" ry="9" fill="#d2d2d2" />
		<ellipse cx="8" cy="13" rx="3" ry="5" fill="#8a8a8a" />
	</svg>
);

const TaskViewIcon = () => (
	<svg width="18" height="18" viewBox="0 0 18 18" fill="none" stroke="#eee" strokeWidth="1.200">
		<rect x="3" y="5" width="10" height="8" />
		<path d="M0 2h14M0 16h14M15 5h3M15 9h3M15 13h3M16 1h2" />
	</svg>
);

/* ---------- Shared copy ---------- */

const BodyCopy = () => (
	<>
		El vídeo <Hot>proporciona</Hot> una manera <Leaf>eficaz para ayudarle</Leaf> a demostrar el punto. Cuando haga clic en Vídeo en
		línea, puede pegar el código para insertar del vídeo que desea agregar. También puede escribir una palabra clave para buscar
		en línea <Under>el vídeo que mejor se adapte</Under> a su <em>documento</em>. Para otorgar a su documento un aspecto
		profesional, Word proporciona encabezados, pies de página, páginas de portada y diseños de cuadro de texto que se
		complementan entre sí. Por ejemplo, puede agregar una portada coincidente, el encabezado y la barra lateral. Haga clic en
		Insertar y elija los elementos que desee de las distintas galerías.
	</>
);

const IFRAME = '<br><iframe src="https://www.orsonwelles.edu.pe" width="640" height="360" allowfullscreen sandbox="allow-scripts allow-forms allow-same-origin "></iframe><br>';

const RULER_NUMS = ['1', '2', '3', '4', '5', '6', '7', '8', '9', '10', '11', '12', '13'];

const OperaWindow = () => (
	<Opera>
		<Sidebar>
			<LogoBox><OperaLogo /></LogoBox>
			<SideItem><HomeBadge><HouseIcon /></HomeBadge></SideItem>
			<SideItem><Star size={19} strokeWidth={1.5} /></SideItem>
			<SideItem><WinkIcon /></SideItem>
			<SideDivider $h={16} />
			<SideItem><RoundBadge $bg="#25c366"><FaWhatsapp size={17} /></RoundBadge></SideItem>
			<SideItem><RoundBadge $bg="#2e8fd0"><FaTelegramPlane size={12} /></RoundBadge></SideItem>
			<SideItem><InstaBadge><Instagram size={15} strokeWidth={1.6} /></InstaBadge></SideItem>
			<SideItem><RoundBadge $bg="#1d8de0"><FaTwitter size={12} /></RoundBadge></SideItem>
			<SideDivider $h={17} />
			<SideItem><PlaneIcon /></SideItem>
			<SideItem><Wallet size={19} strokeWidth={1.5} /></SideItem>
			<SideDivider $h={14} />
			<SideItem><Heart size={18} strokeWidth={1.5} /></SideItem>
			<SideItem><Clock size={18} strokeWidth={1.5} /></SideItem>
			<SideItem><Box size={18} strokeWidth={1.5} /></SideItem>
			<SideRule />
			<SideItem><Dots><i /><i /><i /></Dots></SideItem>
		</Sidebar>
		<BrowserMain>
			<TabBar>
				<Tab $active $w={196}>
					<DocTabIcon />
					<TabLabel>Contenidos</TabLabel>
					<X size={14} />
				</Tab>
				<Tab $w={192}>
					<DwIcon />
					<TabLabel>Orson Welles</TabLabel>
					<X size={14} />
				</Tab>
				<TabSep />
				<TabPlus><Plus size={17} strokeWidth={1.4} /></TabPlus>
				<WindowIcons>
					<Wbtn $w={40}><Search size={17} strokeWidth={1.5} /></Wbtn>
					<Wbtn $w={40} $top={10}><Minus size={16} strokeWidth={1.3} /></Wbtn>
					<Wbtn $w={40}><Square size={14} strokeWidth={1.3} /></Wbtn>
					<Wbtn $w={41}><X size={18} strokeWidth={1.3} /></Wbtn>
				</WindowIcons>
			</TabBar>
			<AddressBar>
				<Aslot $w={32}><ChevronLeft size={20} strokeWidth={1.5} /></Aslot>
				<Aslot $w={32} $c="#7f8791"><ChevronRight size={20} strokeWidth={1.5} /></Aslot>
				<Aslot $w={32}><RotateCw size={15} strokeWidth={1.6} /></Aslot>
				<Aslot $w={32}><LayoutGrid size={15} strokeWidth={1.4} /></Aslot>
				<Aslot $w={12}><ThinSep /></Aslot>
				<Aslot $w={38}><Lock size={14} fill="#cfd2d6" strokeWidth={1.5} /></Aslot>
				<Url>site4.<b>q10.com</b>/EducacionVirtual</Url>
				<Aslot $w={36}><Camera size={16} strokeWidth={1.4} /></Aslot>
				<Aslot $w={16}><ShieldIcon /></Aslot>
				<Aslot $w={36}><PlaneIcon size={16} /></Aslot>
				<Aslot $w={26}><Heart size={16} strokeWidth={1.4} /></Aslot>
				<Aslot $w={6}><ThinSep /></Aslot>
				<Aslot $w={36}><CubeColor /></Aslot>
				<Aslot $w={26}>
					<ConicIcon $size={16} $bg="conic-gradient(#e03a3a, #f0b020, #3aa84a, #2a7ae0, #9a3ac8, #e03a3a)" $core={9} $corebg="#3a4553"><i /></ConicIcon>
				</Aslot>
				<Aslot $w={34}><Box size={16} strokeWidth={1.4} /></Aslot>
				<Aslot $w={30}><Download size={16} strokeWidth={1.4} /><DownloadDot /></Aslot>
				<Aslot $w={36}><SlidersHorizontal size={15} strokeWidth={1.4} /></Aslot>
			</AddressBar>
			<Bookmarks>
				<Bookmark $gap={9}><FaTwitter size={15} color="#3ba7e8" />twiter</Bookmark>
				<Bookmark><GoogleIcon>G</GoogleIcon>translate.google.com</Bookmark>
				<Bookmark $gap={11}><FaYoutube size={15} color="#f01212" />YouTube</Bookmark>
				<Bookmark><PlayCodeIcon />PlayCode - Code Sa...</Bookmark>
				<Bookmark $mr={23}><CodePenIcon><CodePenGlyph /></CodePenIcon>CodePen Settings</Bookmark>
				<ChevronsRight size={13} strokeWidth={1.4} />
			</Bookmarks>
			<ContentRow>
				<Content>
					<LessonHeader>
						<LessonTitle>Lecciones:<div>Audiovisuales</div></LessonTitle>
						<Pager>
							5 de 5
							<PagerBtn $ml={14}><ChevronLeft size={14} strokeWidth={3} /></PagerBtn>
							<PagerBtn $ml={8} $off><ChevronRight size={14} strokeWidth={3} /></PagerBtn>
						</Pager>
					</LessonHeader>
					<EditorBar>
						<EdRow>
							<EdCombo $w={95} $pl={11}>Fuente<Caret /></EdCombo>
							<EdSep />
							<EdCombo $w={93} $pl={7}>14<Caret /></EdCombo>
							<EdSep />
							<EdSlot $w={34}><ColorA>A</ColorA><Caret /></EdSlot>
							<EdSlot $w={34}><BoxA>A</BoxA><Caret /></EdSlot>
							<EdSep />
							<EdSlot><FaBold size={12} /></EdSlot>
							<EdSlot><FaItalic size={12} /></EdSlot>
							<EdSlot><FaUnderline size={13} /></EdSlot>
							<EdSep />
							<EdSlot><RemoveFormat /></EdSlot>
							<EdSep />
						</EdRow>
						<EdRow>
							<EdSlot><NumberList /></EdSlot>
							<EdSlot><BulletList /></EdSlot>
							<EdSep />
							<EdSlot $off><IndentIcon out /></EdSlot>
							<EdSlot><IndentIcon /></EdSlot>
							<EdSep />
							<EdSlot $on><FaAlignLeft size={13} /></EdSlot>
							<EdSlot><FaAlignCenter size={13} /></EdSlot>
							<EdSlot><FaAlignRight size={13} /></EdSlot>
							<EdSlot><FaAlignJustify size={13} /></EdSlot>
							<EdSep />
							<EdSlot><FaLink size={13} /></EdSlot>
							<EdSlot $off><FaUnlink size={13} /></EdSlot>
							<EdSlot><FaImage size={15} /></EdSlot>
							<EdSlot><FilmIcon /></EdSlot>
							<EdSlot><SourceIcon /></EdSlot>
							<EdSlot><UploadIcon /></EdSlot>
							<EdSlot><SmileyIcon /></EdSlot>
							<EdSep />
							<EdSlot><TableIcon /></EdSlot>
							<EdSlot><RuleIcon /></EdSlot>
							<EdSlot><Omega>Ω</Omega></EdSlot>
							<EdSep />
						</EdRow>
						<EdRow>
							<EdSlot $off><Scissors size={15} strokeWidth={2} /></EdSlot>
							<EdSlot $off><Copy size={15} strokeWidth={1.4} /></EdSlot>
							<EdSlot><ClipLines /></EdSlot>
							<EdSlot><ClipIcon mark="T" /></EdSlot>
							<EdSlot><ClipIcon mark="W" /></EdSlot>
							<EdSep />
							<EdSlot><FaReply size={14} /></EdSlot>
							<EdSlot $off><FaShare size={14} /></EdSlot>
							<EdSep />
						</EdRow>
					</EditorBar>
					<EditArea>
						<DocBox $ink="#333a44" $hot="#c00000" $leaf="#38571a" $headc="#002060">
							<Speck>.</Speck>
							<Heading>Demostración de vínculo WEB incrustado a un recurso Q10</Heading>
							<Para><BodyCopy /></Para>
							<LeftCode>{IFRAME}</LeftCode>
							<Para><BodyCopy /></Para>
						</DocBox>
					</EditArea>
				</Content>
				<ScrollTrack>
					<ChevronUp size={13} strokeWidth={2.5} />
					<ScrollThumb />
					<ChevronDown size={13} strokeWidth={2.5} />
				</ScrollTrack>
			</ContentRow>
		</BrowserMain>
	</Opera>
);

const WriterWindow = () => (
	<Writer>
		<TitleBar>
			<WriterDocIcon />
			EJEMPLO DE INCRUSTACIONES.odt - LibreOffice Writer
			<TitleButtons>
				<TitleBtn><Minus size={15} strokeWidth={1.2} /></TitleBtn>
				<TitleBtn><Square size={12} strokeWidth={1.2} /></TitleBtn>
				<TitleBtn><X size={16} strokeWidth={1.2} /></TitleBtn>
			</TitleButtons>
		</TitleBar>
		<MenuBar>
			<span><u>A</u>rchivo</span>
			<span><u>E</u>ditar</span>
			<span><u>V</u>er</span>
			<span><u>I</u>nsertar</span>
			<span><u>F</u>ormato</span>
			<span>E<u>s</u>tilos</span>
			<span><u>T</u>abla</span>
			<span>F<u>o</u>rmulario</span>
			<span><u>H</u>erramientas</span>
			<span>Ve<u>n</u>tana</span>
			<span>Ay<u>u</u>da</span>
			<MenuClose><X size={13} strokeWidth={1.3} /></MenuClose>
		</MenuBar>
		<ToolStack>
			<ToolRow $h={35} $pb={3}>
				<Grip />
				<Tslot $w={30}><NewDoc /></Tslot>
				<Tslot $w={14}><Caret $s={4} $c="#111" /></Tslot>
				<Tslot $w={30}><Folder /></Tslot>
				<Tslot $w={13}><Caret $s={4} $c="#111" /></Tslot>
				<Tslot $w={31}><Floppy /></Tslot>
				<Tslot $w={14}><Caret $s={4} $c="#111" /></Tslot>
				<Tsep $w={8} />
				<Tslot $w={30}><PdfDoc /></Tslot>
				<Tslot $w={38}><Printer size={22} fill="#888" strokeWidth={1.6} /></Tslot>
				<Tslot $w={30}><PreviewDoc /></Tslot>
				<Tsep $w={8} />
				<Tslot $w={34} $c="#555"><Scissors size={20} strokeWidth={1.5} /></Tslot>
				<Tslot $w={32}><CopyDocs /></Tslot>
				<Tslot $w={32}><PasteIcon /></Tslot>
				<Tslot $w={12}><Caret $s={4} $c="#111" /></Tslot>
				<Tsep $w={10} />
				<Tslot $w={28}><BrushIcon /></Tslot>
				<Tsep $w={14} />
				<Tslot $w={26} $c="#3f7fc4"><Undo2 size={22} strokeWidth={1.8} /></Tslot>
				<Tslot $w={18}><Caret $s={4} $c="#111" /></Tslot>
				<Tslot $w={28} $c="#c4c4c4"><Redo2 size={22} strokeWidth={1.8} /></Tslot>
				<Tslot $w={14}><Caret $s={4} $c="#aaa" /></Tslot>
				<Tsep $w={6} />
				<Tslot $w={36}><FindIcon /></Tslot>
				<Tslot $w={30}><AbcIcon /></Tslot>
				<Tslot $w={36}><Pilcrow>¶</Pilcrow></Tslot>
				<Overflow><ChevronsRight size={18} strokeWidth={1.5} /></Overflow>
			</ToolRow>
			<ToolRow $h={39}>
				<Grip />
				<Combo $w={120}>00_TITULO_Q10<ComboArrow><ChevronDown size={12} /></ComboArrow></Combo>
				<Tslot $w={34}><UpdateStyle /></Tslot>
				<Tslot $w={32}><NewStyle /></Tslot>
				<Tsep $w={6} />
				<Combo $w={119} $ml={2}><ComboArrow><ChevronDown size={12} /></ComboArrow></Combo>
				<Combo $w={45} $ml={9}><ComboArrow><ChevronDown size={12} /></ComboArrow></Combo>
				<Tsep $w={10} />
				<Tslot $w={30}><BigGlyph>N</BigGlyph></Tslot>
				<Tslot $w={34}><BigGlyph $font="italic bold">K</BigGlyph></Tslot>
				<Tslot $w={34}><BigGlyph $font="normal" $deco="underline">S</BigGlyph></Tslot>
				<Tslot $w={32}><BigGlyph $font="normal" $deco="line-through">S</BigGlyph></Tslot>
				<Tsep $w={8} />
				<Tslot $w={34}><Script $up>X<i>2</i></Script></Tslot>
				<Tslot $w={34}><Script>X<i>2</i></Script></Tslot>
				<Tsep $w={6} />
				<Tslot $w={34}><HighlightA /></Tslot>
				<Tsep $w={6} />
				<Overflow><ChevronsRight size={18} strokeWidth={1.5} /></Overflow>
			</ToolRow>
		</ToolStack>
		<WriterBody>
			<DocColumn>
				<RulerRow>
					<TabStop><i /></TabStop>
					<Ruler>
						<RulerMargin>1</RulerMargin>
						{RULER_NUMS.map(n => <RulerNum key={n}>{n}</RulerNum>)}
					</Ruler>
					<UpBox><ChevronUp size={13} strokeWidth={2.5} /></UpBox>
				</RulerRow>
				<DocRow>
					<Sheet>
						<CropMark />
						<Selection $ink="#0f2640" $hot="#a23a55" $leaf="#38664a" $headc="#003380">
							<SelectedHead>Demostración de vínculo WEB incrustado a un recurso Q10</SelectedHead>
							<Wide><Para><BodyCopy /></Para></Wide>
							<SelectedCode>{IFRAME}</SelectedCode>
							<Wide><Para><BodyCopy /></Para></Wide>
							<TrailingRoom />
						</Selection>
						<TableBand><TableCell /></TableBand>
						<EmptyPara />
						<CursorLine />
					</Sheet>
					<VScroll>
						<VThumb />
						<ChevronDown size={13} strokeWidth={2.5} />
					</VScroll>
				</DocRow>
				<HScroll>
					<HArrow $w={14}><ChevronLeft size={13} strokeWidth={2.5} /></HArrow>
					<HThumb />
					<HArrow $w={283} $end><ChevronRight size={13} strokeWidth={2.5} /></HArrow>
				</HScroll>
			</DocColumn>
			<Deck>
				<DeckDots><i /><i /><i /></DeckDots>
				<DeckItem><DeckProps /></DeckItem>
				<DeckItem><DeckPage /></DeckItem>
				<DeckItem $on><DeckStyles /></DeckItem>
				<DeckItem><DeckGallery /></DeckItem>
				<DeckItem><Compass size={22} strokeWidth={1.3} color="#3f7fc4" /></DeckItem>
			</Deck>
			<Collapse>▸</Collapse>
		</WriterBody>
		<StatusBar>
			<StatusCell $w={85} $pl={10}>Página 1 de 2</StatusCell>
			<StatusCell $w={223} $pl={8} $tight>Selección: 226 palabras, 1.463 caracteres</StatusCell>
			<StatusCell $w={130} $pl={9}>Estilo predeterminado</StatusCell>
			<StatusCell $w={75} $pl={11} $gap={6}><PageSingle /><PageDouble /><PageBook /></StatusCell>
			<StatusCell $w={145} $pl={8}><Minus size={12} strokeWidth={2} /><ZoomLine /><Plus size={12} strokeWidth={2} /></StatusCell>
			<StatusCell $w={30} $pl={4} $last>100%</StatusCell>
		</StatusBar>
	</Writer>
);

const App = () => (
	<Page>
		<GlobalStyle />
		<Desktop>
			<OperaWindow />
			<WriterWindow />
		</Desktop>
		<Taskbar>
			<TaskItem><WindowsLogo /></TaskItem>
			<TaskItem><TaskViewIcon /></TaskItem>
			<TaskItem $open><ExplorerIcon /></TaskItem>
			<TaskItem><StoreIcon /></TaskItem>
			<TaskItem><SpeakerApp /></TaskItem>
			<TaskItem $active><OperaTask /></TaskItem>
			<TaskItem $open>
				<ConicIcon $bg="conic-gradient(#ea4335 0 33%, #34a853 33% 66%, #fbbc05 66% 100%)" $core={10} $corebg="#4285f4" $ring="2px solid #fff"><i /></ConicIcon>
			</TaskItem>
			<TaskItem><FirefoxIcon /></TaskItem>
			<TaskItem><BraveIcon /></TaskItem>
			<TaskItem><RedAppIcon /></TaskItem>
			<TaskItem><EdgeIcon /></TaskItem>
			<TaskItem><RulerApp /></TaskItem>
			<TaskItem><ChameleonIcon /></TaskItem>
			<TaskItem $open><ExcelIcon /></TaskItem>
			<TaskItem $open><EyeApp /></TaskItem>
			<TaskItem $open><WriterApp /></TaskItem>
			<Tray>
				<TrayIcon $w={24}><ChevronUp size={16} strokeWidth={1.3} /></TrayIcon>
				<TrayIcon $w={24}><Mic size={18} strokeWidth={1.5} fill="#ddd" /></TrayIcon>
				<TrayIcon $w={24}><FaDropbox size={15} /></TrayIcon>
				<TrayIcon $w={24}><Cloud size={16} fill="#eee" /></TrayIcon>
				<TrayIcon $w={34}><Feather size={16} strokeWidth={1.3} /></TrayIcon>
				<TrayIcon $w={34}>ESP</TrayIcon>
				<TrayClock>20:19<br />18/08/2020</TrayClock>
				<Notify>
					<MessageSquare size={17} fill="#eee" />
					<NotifyCount>3</NotifyCount>
				</Notify>
			</Tray>
		</Taskbar>
		<RedFrame />
		<Callout $x={772} $y={155}>Copiar</Callout>
		<Callout $x={520} $y={245}>Pegar</Callout>
		<ArrowLayer width="1366" height="768" viewBox="0 0 1366 768">
			<path d="M775 243L616 306M613 307.500L635 295M613 307.500L634 310" fill="none" stroke="#f00000" strokeWidth="3" />
		</ArrowLayer>
		<LeftCursor />
	</Page>
);

export default App;
